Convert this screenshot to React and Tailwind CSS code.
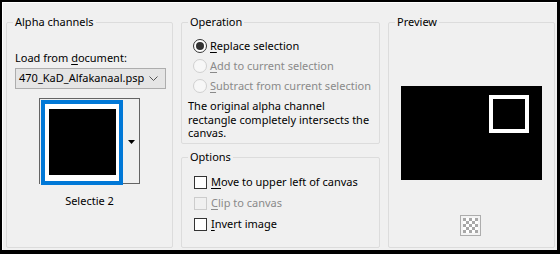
import React from "react";

const font = { fontFamily: '"Noto Sans", "Segoe UI", sans-serif' };

function Group({ title, className, children }) {
  return (
    <fieldset className={`border border-[#dcdcdc] rounded-[2px] ${className}`}>
      <legend className="ml-[6px] px-[2px] leading-[16px] text-black">{title}</legend>
      {children}
    </fieldset>
  );
}

function Radio({ checked, disabled, children }) {
  return (
    <div className="flex items-center h-[20px] pl-[11px] whitespace-nowrap">
      <span
        className={`w-[14px] h-[14px] rounded-full border flex items-center justify-center ${
          disabled ? "border-[#d0d0d0] bg-[#f7f7f7]" : "border-[#333333] bg-white"
        }`}
      >
        {checked && <span className="w-[8px] h-[8px] rounded-full bg-[#333333]" />}
      </span>
      <span className={`ml-[3px] ${disabled ? "text-[#8a8a8a]" : "text-black"}`}>{children}</span>
    </div>
  );
}

function Check({ disabled, children }) {
  return (
    <div className="flex items-center h-[21px] pl-[12px] whitespace-nowrap">
      <span
        className={`w-[13px] h-[13px] border ${
          disabled ? "border-[#cccccc] bg-[#f0f0f0]" : "border-[#333333] bg-white"
        }`}
      />
      <span className={`ml-[4px] ${disabled ? "text-[#8a8a8a]" : "text-black"}`}>{children}</span>
    </div>
  );
}

export default function App() {
  return (
    <div
      className="w-[560px] h-[254px] border-t-2 border-l-2 border-r-[3px] border-b-[4px] border-black flex text-[11px]"
      style={font}
    >
      <div className="flex-1 flex gap-[8px] bg-[#f0f0f0] border-t border-l border-white pl-[3px] pt-[11px]">
        {/* Alpha channels */}
        <Group title="Alpha channels" className="w-[167px] h-[234px]">
          <div className="pl-[8px] pr-[5px]">
            <div className="mt-[20px] leading-[16px]">
              Load from <span className="underline underline-offset-2">d</span>ocument:
            </div>
            <div className="mt-[2px] h-[21px] w-[151px] border border-[#adadad] bg-[#e5e5e5] flex items-center justify-between pl-[3px] pr-[7px] whitespace-nowrap">
              <span>470_KaD_Alfakanaal.psp</span>
              <svg width="9" height="5" viewBox="0 0 9 5">
                <path d="M0.5 0.5 L4.5 4.5 L8.5 0.5" fill="none" stroke="#555" strokeWidth="1" />
              </svg>
            </div>
          </div>
          <div className="flex flex-col items-center mt-[9px]">
            <div className="flex w-[101px] h-[86px] border-t border-l border-r border-[#646464]">
              <div className="mt-[1px] ml-[1px] w-[82px] h-[85px] border-[4px] border-[#0078d7] bg-white pt-[5px] pl-[4px]">
                <div className="w-[67px] h-[66px] bg-black" />
              </div>
              <div className="flex-1 h-[85px] border-b border-[#646464] flex items-center justify-center">
                <svg width="7" height="4" viewBox="0 0 7 4" className="mt-[1px]">
                  <path d="M0 0 H7 L3.5 4 Z" fill="#000" />
                </svg>
              </div>
            </div>
            <div className="mt-[9px] leading-[16px]">Selectie 2</div>
          </div>
        </Group>

        {/* Operation / Options */}
        <div className="w-[199px] flex flex-col gap-[5px]">
          <Group title="Operation" className="h-[130px]">
            <div className="mt-[6px]">
              <Radio checked>
                <span className="underline underline-offset-2">R</span>eplace selection
              </Radio>
              <Radio disabled>
                <span className="underline underline-offset-2">A</span>dd to current selection
              </Radio>
              <Radio disabled>
                <span className="underline underline-offset-2">S</span>ubtract from current selection
              </Radio>
            </div>
            <p className="pl-[6px] mt-[3px] leading-[13.5px] whitespace-nowrap">
              The original alpha channel
              <br />
              rectangle completely intersects the
              <br />
              canvas.
            </p>
          </Group>
          <Group title="Options" className="h-[99px]">
            <div className="mt-[7px]">
              <Check>
                <span className="underline underline-offset-2">M</span>ove to upper left of canvas
              </Check>
              <Check disabled>
                <span className="underline underline-offset-2">C</span>lip to canvas
              </Check>
              <Check>
                <span className="underline underline-offset-2">I</span>nvert image
              </Check>
            </div>
          </Group>
        </div>

        {/* Preview */}
        <Group title="Preview" className="w-[167px] h-[234px]">
          <div className="flex flex-col items-center">
            <div className="mt-[56px] w-[141px] h-[94px] bg-black flex items-start justify-end pt-[9px] pr-[13px]">
              <div className="w-[40px] h-[38px] border-[4px] border-white" />
            </div>
            <svg width="21" height="21" viewBox="0 0 21 21" className="mt-[35px] mr-[2px]">
              <rect x="0.5" y="0.5" width="20" height="20" fill="#f4f4f4" stroke="#adadad" />
              <rect x="3" y="3" width="15" height="15" fill="#fff" />
              <rect x="3" y="3" width="3" height="3" fill="#a8a8a8" />
              <rect x="9" y="3" width="3" height="3" fill="#a8a8a8" />
              <rect x="15" y="3" width="3" height="3" fill="#a8a8a8" />
              <rect x="6" y="6" width="3" height="3" fill="#a8a8a8" />
              <rect x="12" y="6" width="3" height="3" fill="#a8a8a8" />
              <rect x="3" y="9" width="3" height="3" fill="#a8a8a8" />
              <rect x="9" y="9" width="3" height="3" fill="#a8a8a8" />
              <rect x="15" y="9" width="3" height="3" fill="#a8a8a8" />
              <rect x="6" y="12" width="3" height="3" fill="#a8a8a8" />
              <rect x="12" y="12" width="3" height="3" fill="#a8a8a8" />
              <rect x="3" y="15" width="3" height="3" fill="#a8a8a8" />
              <rect x="9" y="15" width="3" height="3" fill="#a8a8a8" />
              <rect x="15" y="15" width="3" height="3" fill="#a8a8a8" />
            </svg>
          </div>
        </Group>
      </div>
    </div>
  );
}
